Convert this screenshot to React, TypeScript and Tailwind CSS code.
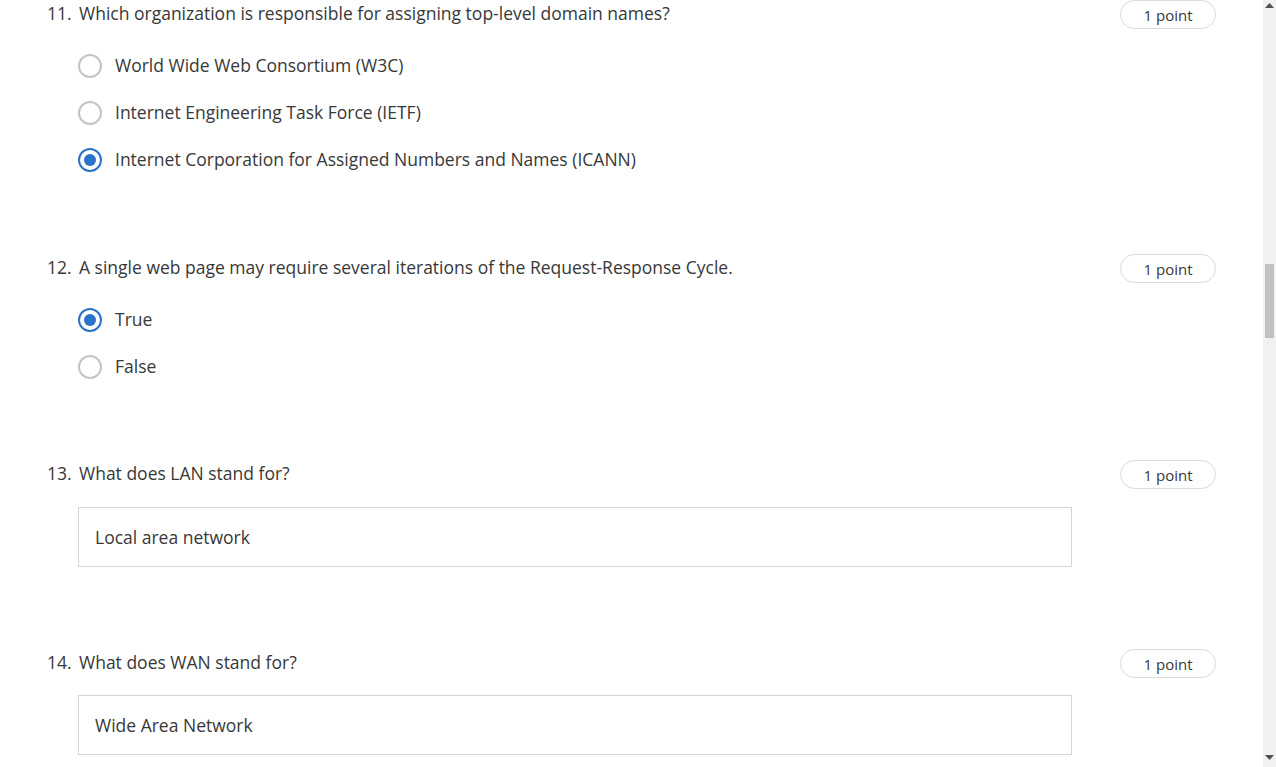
import React from "react";

type Opt = { label: string; checked?: boolean };

function Radio({ checked }: { checked?: boolean }) {
  if (checked) {
    return (
      <span className="flex h-[24px] w-[24px] shrink-0 items-center justify-center rounded-full border-2 border-[#2a73cc] bg-white">
        <span className="h-[12px] w-[12px] rounded-full bg-[#2a73cc]" />
      </span>
    );
  }
  return <span className="h-[24px] w-[24px] shrink-0 rounded-full border-2 border-[#c4c4c4] bg-white" />;
}

function Header({ n, text }: { n: number; text: string }) {
  return (
    <div className="flex h-[29px] items-start justify-between">
      <div className="flex leading-[26px]">
        <span className="w-[32px] shrink-0">{n}.</span>
        <span>{text}</span>
      </div>
      <div className="flex h-[29px] w-[96px] items-center justify-center rounded-full border border-[#dadada] pt-[2px] text-[15px] text-[#383838]">
        1 point
      </div>
    </div>
  );
}

function Choice({ n, text, options, className }: { n: number; text: string; options: Opt[]; className?: string }) {
  return (
    <div className={className}>
      <Header n={n} text={text} />
      <div className="mt-[13px] flex flex-col pl-[31px]">
        {options.map((o) => (
          <div key={o.label} className="flex h-[47px] items-center gap-[13px]">
            <Radio checked={o.checked} />
            <span>{o.label}</span>
          </div>
        ))}
      </div>
    </div>
  );
}

function TextQ({ n, text, value, className, gap }: { n: number; text: string; value: string; className?: string; gap: string }) {
  return (
    <div className={className}>
      <Header n={n} text={text} />
      <div className={`${gap} ml-[31px] flex h-[60px] w-[994px] items-center border border-[#d3d4de] pl-[16px]`}>
        {value}
      </div>
    </div>
  );
}

export default function App() {
  return (
    <div
      className="flex h-[767px] w-full overflow-hidden bg-white text-[17.5px] text-[#383838]"
      style={{ fontFamily: '"Open Sans", "Noto Sans", sans-serif' }}
    >
      <div className="min-w-0 flex-1 px-[47px]">
        <Choice
          n={11}
          text="Which organization is responsible for assigning top-level domain names?"
          options={[
            { label: "World Wide Web Consortium (W3C)" },
            { label: "Internet Engineering Task Force (IETF)" },
            { label: "Internet Corporation for Assigned Numbers and Names (ICANN)", checked: true },
          ]}
        />
        <Choice
          className="mt-[71px]"
          n={12}
          text="A single web page may require several iterations of the Request-Response Cycle."
          options={[{ label: "True", checked: true }, { label: "False" }]}
        />
        <TextQ className="mt-[70px]" gap="mt-[18px]" n={13} text="What does LAN stand for?" value="Local area network" />
        <TextQ className="mt-[82px]" gap="mt-[17px]" n={14} text="What does WAN stand for?" value="Wide Area Network" />
      </div>
      <div className="flex w-[13px] shrink-0 flex-col items-center bg-[#f1f1f1]">
        <svg width="9" height="5" viewBox="0 0 9 5" className="mt-[3px]">
          <polygon points="0,5 4.5,0 9,5" fill="#505050" />
        </svg>
        <div className="mt-[256px] h-[74px] w-[9px] bg-[#c1c1c1]" />
        <div className="flex-1" />
        <svg width="9" height="5" viewBox="0 0 9 5" className="mb-[7px]">
          <polygon points="0,0 9,0 4.5,5" fill="#505050" />
        </svg>
      </div>
    </div>
  );
}
